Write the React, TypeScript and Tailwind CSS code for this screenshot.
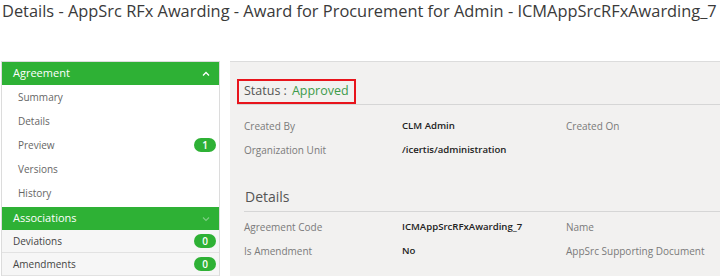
import React from "react";

const font = { fontFamily: '"Open Sans", "Noto Sans", sans-serif' };

function Badge({ n }: { n: string }) {
  return (
    <span className="flex h-[14px] w-[22px] items-center justify-center rounded-full bg-[#2eb135] text-[10px] font-semibold text-white">
      {n}
    </span>
  );
}

function Row({ a, b, c }: { a: string; b: string; c: string }) {
  return (
    <div className="flex h-[24px] items-center whitespace-nowrap text-[10px]">
      <span className="w-[158px] shrink-0 text-[#7a7a7a]">{a}</span>
      <span className="w-[164px] shrink-0 text-[9.6px] font-semibold text-[#222]">{b}</span>
      <span className="text-[#7a7a7a]">{c}</span>
    </div>
  );
}

export default function App() {
  return (
    <div className="relative h-[280px] w-[720px] overflow-hidden bg-white" style={font}>
      <div className="h-[61px] whitespace-nowrap pl-[2px] text-[16.4px] leading-[22px] text-[#3a3a3a]">
        Details - AppSrc RFx Awarding - Award for Procurement for Admin - ICMAppSrcRFxAwarding_7
      </div>
      <div className="flex">
        <div className="ml-[1px] w-[219px] shrink-0 border border-b-0 border-[#dcdcdc] text-[10px]">
          <div className="flex h-[23px] items-center justify-between bg-[#2eb135] pl-[11px] pr-[9px] text-[11px] text-white">
            <span>Agreement</span>
            <svg width="8" height="6" viewBox="0 0 8 6"><path d="M1 4.5 L4 1.5 L7 4.5" stroke="white" strokeWidth="1.3" fill="none" /></svg>
          </div>
          <div className="flex h-[24px] items-center pl-[16px] text-[#666]">Summary</div>
          <div className="flex h-[24px] items-center pl-[16px] text-[#666]">Details</div>
          <div className="flex h-[24px] items-center justify-between pl-[16px] pr-[3px] text-[#666]">
            <span>Preview</span>
            <Badge n="1" />
          </div>
          <div className="flex h-[24px] items-center pl-[16px] text-[#666]">Versions</div>
          <div className="flex h-[26px] items-center pb-[2px] pl-[16px] text-[#666]">History</div>
          <div className="flex h-[23px] items-center justify-between bg-[#2eb135] pl-[11px] pr-[9px] text-[11px] text-white">
            <span>Associations</span>
            <svg width="8" height="6" viewBox="0 0 8 6"><path d="M1 1.5 L4 4.5 L7 1.5" stroke="#7fcf84" strokeWidth="1.1" fill="none" /></svg>
          </div>
          <div className="flex h-[23px] items-center justify-between border-b border-[#e2e2e2] bg-[#f6f6f6] pl-[11px] pr-[3px] text-[#444]">
            <span>Deviations</span>
            <Badge n="0" />
          </div>
          <div className="flex h-[23px] items-center justify-between border-b border-[#e2e2e2] bg-[#f6f6f6] pl-[11px] pr-[3px] text-[#444]">
            <span>Amendments</span>
            <Badge n="0" />
          </div>
        </div>
        <div className="ml-[10px] flex-1 border-t border-[#dcdcdc] bg-[#f2f1f0] pl-[7px] pt-[17px]">
          <div className="border-b border-[#d6d6d6]">
            <div className="inline-flex h-[25px] items-center whitespace-nowrap border-2 border-[#e8141c] pl-[5px] pr-[5px] text-[12.5px] align-bottom">
              <span className="text-[#555]">Status :</span>
              <span className="ml-[5px] text-[#3d9b4b]">Approved</span>
            </div>
          </div>
          <div className="pl-[7px] pt-[9px]">
            <Row a="Created By" b="CLM Admin" c="Created On" />
            <Row a="Organization Unit" b="/icertis/administration" c="" />
            <div className="mb-[3px] mt-[24px] flex h-[26px] items-center border-b border-[#d6d6d6] pb-[4px] pl-[1px] text-[14px] text-[#555]">
              Details
            </div>
            <Row a="Agreement Code" b="ICMAppSrcRFxAwarding_7" c="Name" />
            <Row a="Is Amendment" b="No" c="AppSrc Supporting Document" />
          </div>
        </div>
      </div>
    </div>
  );
}
